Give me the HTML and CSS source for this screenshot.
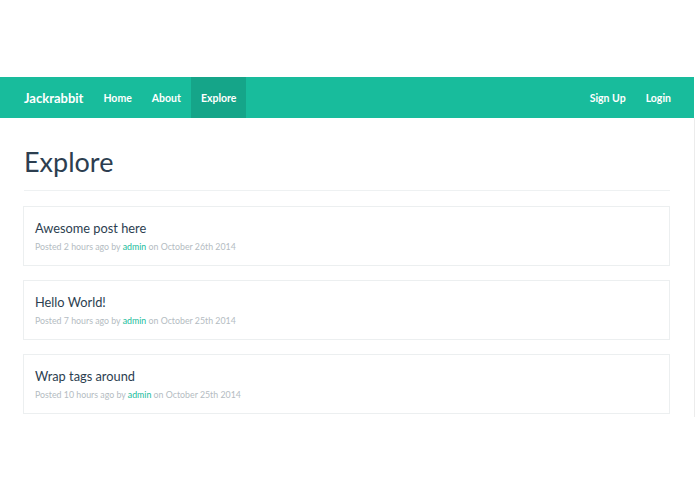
FILE: index.html
```html
<!DOCTYPE html>
<html lang="en">
<head>
<meta charset="utf-8">
<title>Jackrabbit - Explore</title>
<link rel="stylesheet" href="styles.css">
</head>
<body>
<div class="top-space"></div>
<nav class="navbar">
  <div class="nav-left">
    <a class="brand" href="#">Jackrabbit</a>
    <a class="nav-link" href="#">Home</a>
    <a class="nav-link" href="#">About</a>
    <a class="nav-link active" href="#">Explore</a>
  </div>
  <div class="nav-right">
    <a class="nav-link" href="#">Sign Up</a>
    <a class="nav-link" href="#">Login</a>
  </div>
</nav>
<main class="page">
  <div class="container">
    <h1 class="page-title">Explore</h1>
    <hr class="divider">
    <div class="post">
      <h4 class="post-title">Awesome post here</h4>
      <p class="post-meta">Posted 2 hours ago by <a href="#">admin</a> on October 26th 2014</p>
    </div>
    <div class="post">
      <h4 class="post-title">Hello World!</h4>
      <p class="post-meta">Posted 7 hours ago by <a href="#">admin</a> on October 25th 2014</p>
    </div>
    <div class="post">
      <h4 class="post-title">Wrap tags around</h4>
      <p class="post-meta">Posted 10 hours ago by <a href="#">admin</a> on October 25th 2014</p>
    </div>
  </div>
</main>
</body>
</html>
```
FILE: styles.css
```css
* { box-sizing: border-box; }
html, body { margin: 0; padding: 0; background: #fff; }
body {
  font-family: Lato, "Open Sans", "Liberation Sans", sans-serif;
  color: #2c3e50;
  width: 695px;
}
.top-space { height: 77px; }
.navbar {
  display: flex;
  justify-content: space-between;
  align-items: stretch;
  height: 41px;
  width: 694px;
  background: #18bc9c;
  padding: 0 13px 0 14px;
}
.nav-left, .nav-right { display: flex; align-items: stretch; }
.navbar a {
  color: #fff;
  text-decoration: none;
  display: flex;
  align-items: center;
}
.brand {
  font-size: 13px;
  font-weight: 700;
  padding: 0 10px 0 10px;
}
.nav-link {
  font-size: 10.5px;
  font-weight: 700;
  padding: 0 10px;
}
.nav-link.active { background: #15a589; }
.page {
  width: 695px;
  height: 299px;
  border-right: 1px solid #ececec;
}
.container { padding: 0 24px 0 23px; }
.page-title {
  margin: 0;
  padding-top: 28px;
  font-size: 27px;
  font-weight: 400;
  line-height: 32px;
  padding-left: 1px;
}
.divider {
  border: 0;
  border-top: 1px solid #eef1f2;
  margin: 12px 0 15px 1px;
}
.post {
  border: 1px solid #eceff0;
  height: 60px;
  padding: 11px 11px 0 11px;
  margin-bottom: 14px;
}
.post-title {
  margin: 0;
  font-size: 12.8px;
  font-weight: 400;
  line-height: 20px;
  color: #2c3e50;
}
.post-meta {
  margin: 2px 0 0 0;
  font-size: 8.8px;
  line-height: 14px;
  color: #b4bcc2;
}
.post-meta a { color: #18bc9c; text-decoration: none; }
```
